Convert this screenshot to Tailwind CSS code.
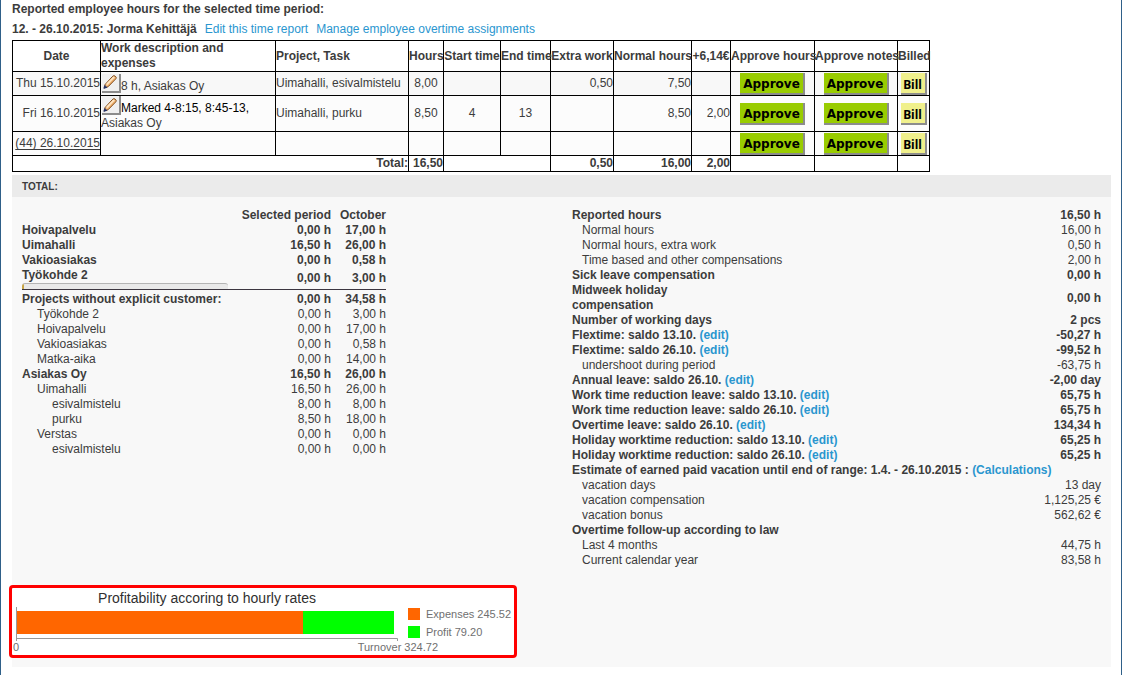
<!DOCTYPE html>
<html lang="en">
<head>
<meta charset="utf-8">
<meta name="viewport" content="width=device-width, initial-scale=1">
<title>Reported employee hours</title>
<script src="https://cdn.jsdelivr.net/npm/@tailwindcss/browser@4"></script>
</head>
<body class="bg-white text-[#3c3c3c] text-[12px] leading-[15px] font-['Liberation_Sans',Arial,sans-serif]">
<svg class="hidden" aria-hidden="true">
  <symbol id="pencil" viewBox="0 0 16 16">
    <path d="M2.2 14 3.2 10.4 10.8 2.2Q11.9 1.2 13 2.1L13.8 2.8Q14.7 3.8 13.8 4.8L6 12.8Z" fill="#f6c48a" stroke="#7a4413" stroke-width="1"/>
    <path d="M4.8 10.4 12 3" stroke="#ffe6c4" stroke-width="1.6"/>
    <path d="M5.8 12 13.2 4.4" stroke="#d98e45" stroke-width=".8"/>
    <path d="M1.8 14.4 2.7 11.4 5 13.4Z" fill="#1d2f6b" stroke="#1d2f6b" stroke-width=".6"/>
  </symbol>
</svg>
<main class="min-h-screen border-x border-[#2f6089] pl-[11px] pr-[10px] pt-[2px]">
  <h1 class="font-bold">Reported employee hours for the selected time period:</h1>
  <div class="mt-[5px] flex gap-2">
    <h2 class="font-bold">12. - 26.10.2015: Jorma Kehittäjä</h2>
    <a href="#" class="text-[#2a96cf]">Edit this time report</a>
    <a href="#" class="text-[#2a96cf]">Manage employee overtime assignments</a>
  </div>

  <table class="mt-[3px] w-[918px] table-fixed border-collapse whitespace-nowrap [&_td]:border [&_td]:border-black [&_th]:border [&_th]:border-black [&_td]:p-0 [&_th]:p-0">
    <colgroup>
      <col class="w-[88px]"><col class="w-[175px]"><col class="w-[133px]"><col class="w-[35px]"><col class="w-[57px]"><col class="w-[50px]"><col class="w-[63px]"><col class="w-[78px]"><col class="w-[39px]"><col class="w-[84px]"><col class="w-[83px]"><col class="w-[32px]">
    </colgroup>
    <thead>
      <tr class="h-[31px]">
        <th>Date</th><th class="text-left">Work description and<br>expenses</th><th class="text-left">Project, Task</th><th>Hours</th><th>Start time</th><th>End time</th><th>Extra work</th><th>Normal hours</th><th>+6,14€</th><th>Approve hours</th><th>Approve notes</th><th>Billed</th>
      </tr>
    </thead>
    <tbody>
      <tr class="h-[24px] bg-[#f8f8f8]">
        <td class="text-right">Thu 15.10.2015</td>
        <td><button type="button" aria-label="Edit entry" class="ml-px inline-block size-[19px] border-r-2 border-b-2 border-[#8c8c8c] bg-[#f0f0f0] align-text-bottom"><svg class="size-[16px]"><use href="#pencil"/></svg></button>8 h, Asiakas Oy</td>
        <td>Uimahalli, esivalmistelu</td><td class="text-center">8,00</td><td></td><td></td><td class="text-right">0,50</td><td class="text-right">7,50</td><td></td>
        <td class="text-center"><button type="button" class="block mx-auto h-[22px] w-[65px] border-r-2 border-b-2 border-[#8c8c8c] bg-[#99cc00] pt-[4px] text-black font-bold font-['DejaVu_Sans',Verdana,sans-serif]">Approve</button></td>
        <td class="text-center"><button type="button" class="block mx-auto h-[22px] w-[65px] border-r-2 border-b-2 border-[#8c8c8c] bg-[#99cc00] pt-[4px] text-black font-bold font-['DejaVu_Sans',Verdana,sans-serif]">Approve</button></td>
        <td><button type="button" class="block mx-auto h-[22px] w-[26px] border-r-2 border-b-2 border-[#8c8c8c] bg-[#f0f08c] pt-[4px] text-black font-bold font-['Noto_Sans',Tahoma,sans-serif]">Bill</button></td>
      </tr>
      <tr class="h-[36px] bg-[#fcfcfc]">
        <td class="text-right">Fri 16.10.2015</td>
        <td><button type="button" aria-label="Edit entry" class="ml-px inline-block size-[19px] border-r-2 border-b-2 border-[#8c8c8c] bg-[#f0f0f0] align-text-bottom"><svg class="size-[16px]"><use href="#pencil"/></svg></button><span class="text-black">Marked 4-8:15, 8:45-13,</span><br>Asiakas Oy</td>
        <td>Uimahalli, purku</td><td class="text-center">8,50</td><td class="text-center">4</td><td class="text-center">13</td><td></td><td class="text-right">8,50</td><td class="text-right">2,00</td>
        <td class="text-center"><button type="button" class="block mx-auto h-[22px] w-[65px] border-r-2 border-b-2 border-[#8c8c8c] bg-[#99cc00] pt-[4px] text-black font-bold font-['DejaVu_Sans',Verdana,sans-serif]">Approve</button></td>
        <td class="text-center"><button type="button" class="block mx-auto h-[22px] w-[65px] border-r-2 border-b-2 border-[#8c8c8c] bg-[#99cc00] pt-[4px] text-black font-bold font-['DejaVu_Sans',Verdana,sans-serif]">Approve</button></td>
        <td><button type="button" class="block mx-auto h-[22px] w-[26px] border-r-2 border-b-2 border-[#8c8c8c] bg-[#f0f08c] pt-[4px] text-black font-bold font-['Noto_Sans',Tahoma,sans-serif]">Bill</button></td>
      </tr>
      <tr class="h-[24px] bg-[#fcfcfc]">
        <td class="text-right"><span class="underline underline-offset-2">(44) 26.10.2015</span></td>
        <td></td><td></td><td></td><td></td><td></td><td></td><td></td><td></td>
        <td class="text-center"><button type="button" class="block mx-auto h-[22px] w-[65px] border-r-2 border-b-2 border-[#8c8c8c] bg-[#99cc00] pt-[4px] text-black font-bold font-['DejaVu_Sans',Verdana,sans-serif]">Approve</button></td>
        <td class="text-center"><button type="button" class="block mx-auto h-[22px] w-[65px] border-r-2 border-b-2 border-[#8c8c8c] bg-[#99cc00] pt-[4px] text-black font-bold font-['DejaVu_Sans',Verdana,sans-serif]">Approve</button></td>
        <td><button type="button" class="block mx-auto h-[22px] w-[26px] border-r-2 border-b-2 border-[#8c8c8c] bg-[#f0f08c] pt-[4px] text-black font-bold font-['Noto_Sans',Tahoma,sans-serif]">Bill</button></td>
      </tr>
    </tbody>
    <tfoot>
      <tr class="h-[16px] text-right font-bold">
        <td colspan="3">Total:</td><td>16,50</td><td colspan="2"></td><td>0,50</td><td>16,00</td><td>2,00</td><td></td><td></td><td></td>
      </tr>
    </tfoot>
  </table>

  <section class="mt-[3px] bg-[#f8f8f8] pb-[9px]">
    <h3 class="h-[22px] bg-[#ebebeb] px-[10px] text-[10px] leading-[23px] font-bold">TOTAL:</h3>
    <div class="flex min-h-[388px] gap-[186px] px-[10px] pt-[11px]">
      <table class="w-[364px] shrink-0 table-fixed self-start border-collapse [&_td]:p-0 [&_td+td]:text-right [&_th]:text-right [&_th]:whitespace-nowrap">
        <colgroup><col><col class="w-[90px]"><col class="w-[55px]"></colgroup>
        <thead><tr><td></td><th>Selected period</th><th>October</th></tr></thead>
        <tbody class="font-bold">
          <tr><td>Hoivapalvelu</td><td>0,00 h</td><td>17,00 h</td></tr>
          <tr><td>Uimahalli</td><td>16,50 h</td><td>26,00 h</td></tr>
          <tr><td>Vakioasiakas</td><td>0,00 h</td><td>0,58 h</td></tr>
          <tr class="border-b border-[#3c3640]"><td>Työkohde 2<div role="progressbar" aria-label="Työkohde 2" aria-valuenow="0" class="h-[6px] w-[206px] overflow-hidden rounded-t-[3px] border-t border-[#b4b4b4] bg-[#e9e9e9]"><div class="h-full w-[2px] bg-[#c9a545]"></div></div></td><td>0,00 h</td><td>3,00 h</td></tr>
        </tbody>
        <tbody>
          <tr class="font-bold [&>td]:pt-[2px]"><td class="whitespace-nowrap">Projects without explicit customer:</td><td>0,00 h</td><td>34,58 h</td></tr>
          <tr><td><span class="pl-[15px]">Työkohde 2</span></td><td>0,00 h</td><td>3,00 h</td></tr>
          <tr><td><span class="pl-[15px]">Hoivapalvelu</span></td><td>0,00 h</td><td>17,00 h</td></tr>
          <tr><td><span class="pl-[15px]">Vakioasiakas</span></td><td>0,00 h</td><td>0,58 h</td></tr>
          <tr><td><span class="pl-[15px]">Matka-aika</span></td><td>0,00 h</td><td>14,00 h</td></tr>
          <tr class="font-bold"><td>Asiakas Oy</td><td>16,50 h</td><td>26,00 h</td></tr>
          <tr><td><span class="pl-[15px]">Uimahalli</span></td><td>16,50 h</td><td>26,00 h</td></tr>
          <tr><td><span class="pl-[30px]">esivalmistelu</span></td><td>8,00 h</td><td>8,00 h</td></tr>
          <tr><td><span class="pl-[30px]">purku</span></td><td>8,50 h</td><td>18,00 h</td></tr>
          <tr><td><span class="pl-[15px]">Verstas</span></td><td>0,00 h</td><td>0,00 h</td></tr>
          <tr><td><span class="pl-[30px]">esivalmistelu</span></td><td>0,00 h</td><td>0,00 h</td></tr>
        </tbody>
      </table>

      <table class="min-w-0 flex-1 self-start border-collapse whitespace-nowrap [&_td]:p-0 [&_th]:p-0 [&_th]:text-left [&_td]:text-right [&_a]:text-[#2a96cf]">
        <tbody>
          <tr class="font-bold"><th>Reported hours</th><td>16,50 h</td></tr>
          <tr><th class="font-normal"><span class="pl-[10px]">Normal hours</span></th><td>16,00 h</td></tr>
          <tr><th class="font-normal"><span class="pl-[10px]">Normal hours, extra work</span></th><td>0,50 h</td></tr>
          <tr><th class="font-normal"><span class="pl-[10px]">Time based and other compensations</span></th><td>2,00 h</td></tr>
          <tr class="font-bold"><th>Sick leave compensation</th><td>0,00 h</td></tr>
          <tr class="font-bold"><th>Midweek holiday<br>compensation</th><td>0,00 h</td></tr>
          <tr class="font-bold"><th>Number of working days</th><td>2 pcs</td></tr>
          <tr class="font-bold"><th>Flextime: saldo 13.10. <a href="#">(edit)</a></th><td>-50,27 h</td></tr>
          <tr class="font-bold"><th>Flextime: saldo 26.10. <a href="#">(edit)</a></th><td>-99,52 h</td></tr>
          <tr><th class="font-normal"><span class="pl-[10px]">undershoot during period</span></th><td>-63,75 h</td></tr>
          <tr class="font-bold"><th>Annual leave: saldo 26.10. <a href="#">(edit)</a></th><td>-2,00 day</td></tr>
          <tr class="font-bold"><th>Work time reduction leave: saldo 13.10. <a href="#">(edit)</a></th><td>65,75 h</td></tr>
          <tr class="font-bold"><th>Work time reduction leave: saldo 26.10. <a href="#">(edit)</a></th><td>65,75 h</td></tr>
          <tr class="font-bold"><th>Overtime leave: saldo 26.10. <a href="#">(edit)</a></th><td>134,34 h</td></tr>
          <tr class="font-bold"><th>Holiday worktime reduction: saldo 13.10. <a href="#">(edit)</a></th><td>65,25 h</td></tr>
          <tr class="font-bold"><th>Holiday worktime reduction: saldo 26.10. <a href="#">(edit)</a></th><td>65,25 h</td></tr>
          <tr class="font-bold"><th colspan="2">Estimate of earned paid vacation until end of range: 1.4. - 26.10.2015 : <a href="#">(Calculations)</a></th></tr>
          <tr><th class="font-normal"><span class="pl-[10px]">vacation days</span></th><td>13 day</td></tr>
          <tr><th class="font-normal"><span class="pl-[10px]">vacation compensation</span></th><td>1,125,25 €</td></tr>
          <tr><th class="font-normal"><span class="pl-[10px]">vacation bonus</span></th><td>562,62 €</td></tr>
          <tr class="font-bold"><th colspan="2">Overtime follow-up according to law</th></tr>
          <tr><th class="font-normal"><span class="pl-[10px]">Last 4 months</span></th><td>44,75 h</td></tr>
          <tr><th class="font-normal"><span class="pl-[10px]">Current calendar year</span></th><td>83,58 h</td></tr>
        </tbody>
      </table>
    </div>

    <figure class="-ml-[3px] w-[508px] rounded-[4px] border-[3px] border-[#ff0000] bg-white pb-[2px] text-[11px] text-[#707070]">
      <figcaption class="h-[19px] w-[390px] text-center text-[14px] leading-[21px] text-[#303030]">Profitability accoring to hourly rates</figcaption>
      <div class="flex gap-[10px]">
        <svg class="h-[34px] w-[386px]" viewBox="0 0 386 34" role="img" aria-label="Expenses 245.52, profit 79.20">
          <path d="M4.5 0V34M4 31.5H385.5V35" fill="none" stroke="#999"/>
          <rect x="5" y="4" width="286" height="23" fill="#ff6600"/>
          <rect x="291" y="4" width="91" height="23" fill="#00ff00"/>
        </svg>
        <ul class="flex flex-col gap-[6px] pt-px leading-[12px]">
          <li class="flex gap-[6px]"><span class="size-[12px] bg-[#ff6600]"></span>Expenses 245.52</li>
          <li class="flex gap-[6px]"><span class="size-[12px] bg-[#00ff00]"></span>Profit 79.20</li>
        </ul>
      </div>
      <div class="flex w-[426px] justify-between pl-px leading-[12px]"><span>0</span><span>Turnover 324.72</span></div>
    </figure>
  </section>
</main>
</body>
</html>
